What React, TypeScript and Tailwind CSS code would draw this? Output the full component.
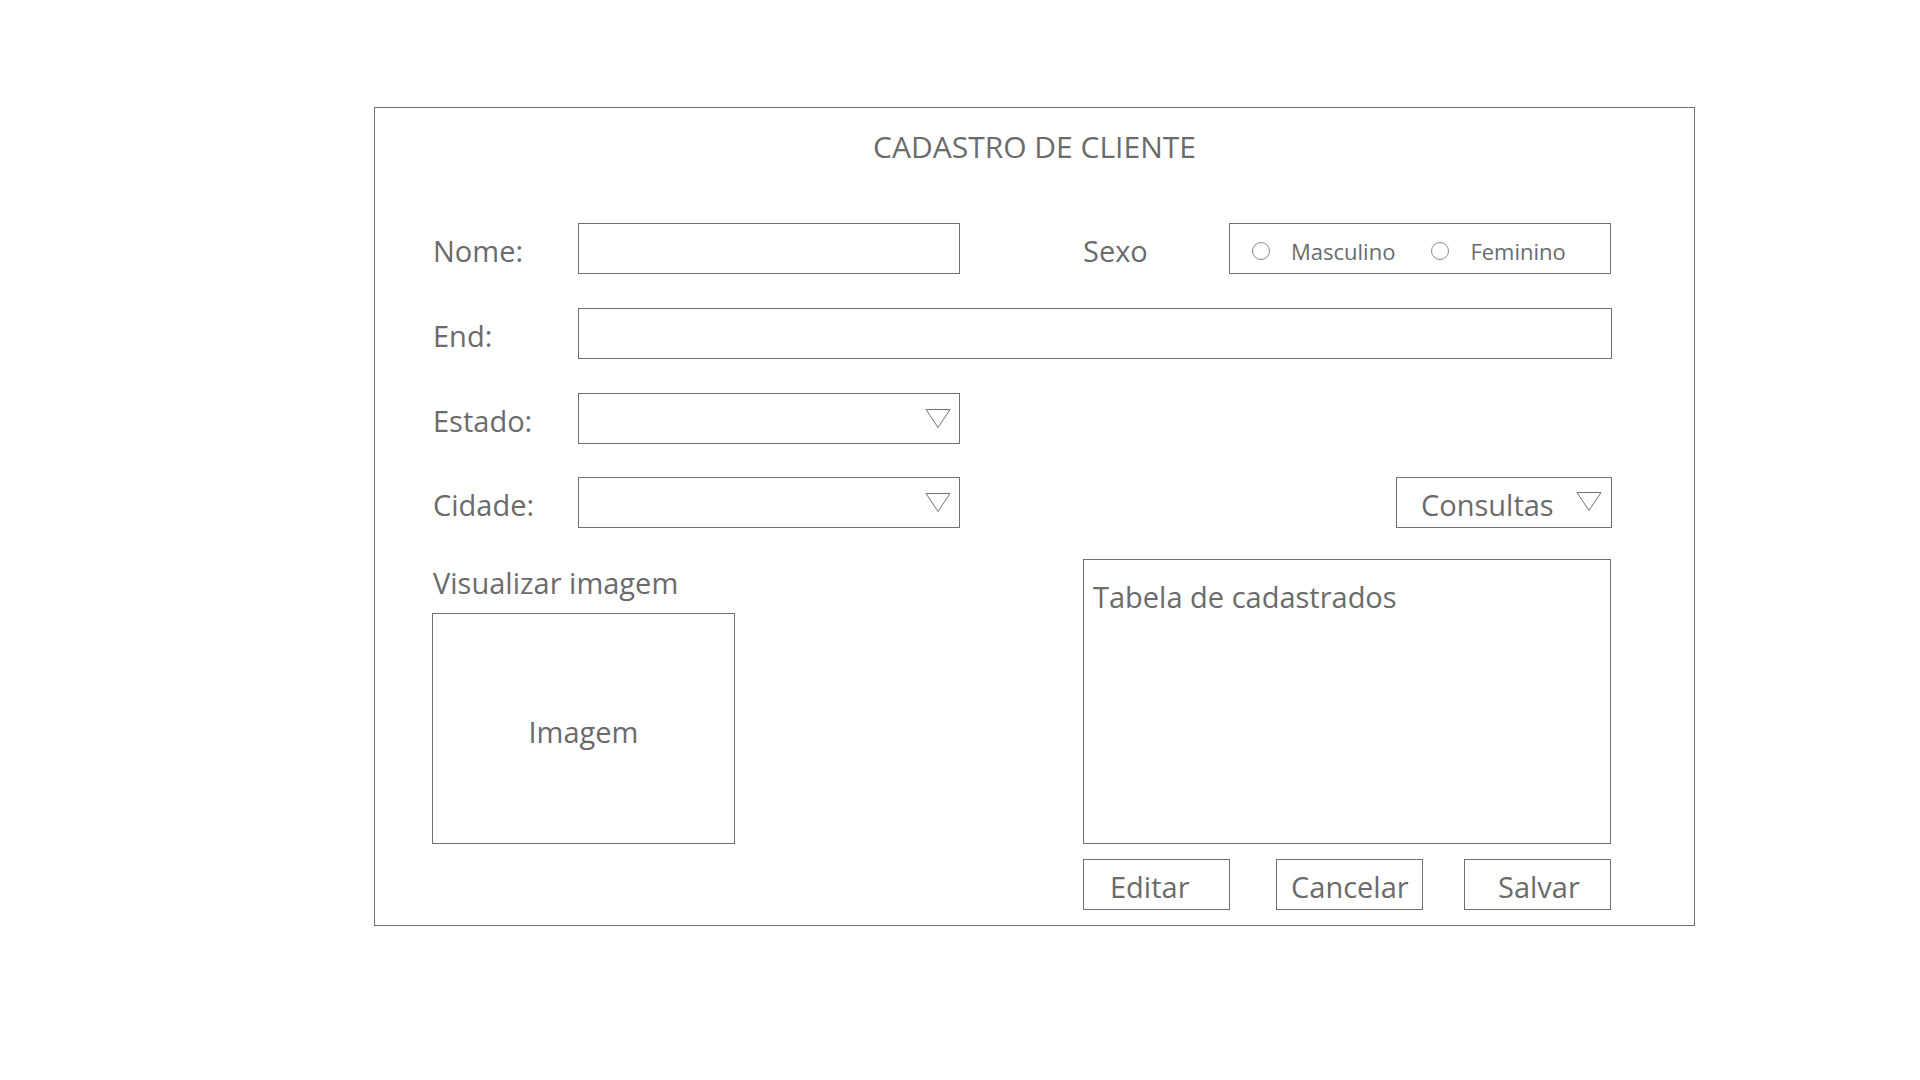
import React from 'react'

function Triangle(): React.ReactElement {
  return (
    <svg width='26' height='21' viewBox='0 0 26 21' fill='none'>
      <path d='M1 1.5 L25 1.5 L13 19.5 Z' stroke='#707070' strokeWidth='1' strokeLinejoin='miter' />
    </svg>
  )
}

function Radio({ label }: { label: string }): React.ReactElement {
  return (
    <div className='flex items-center'>
      <span className='block w-[18px] h-[18px] rounded-full border border-[#8a8a8a]'></span>
      <span className='ml-[21px] text-[22px] leading-none'>{label}</span>
    </div>
  )
}

function Label({ text }: { text: string }): React.ReactElement {
  return <span className='w-[145px] pt-[4px] text-[29px] leading-none'>{text}</span>
}

function App(): React.ReactElement {
  return (
    <div className='w-[1920px] h-[1080px] bg-white pt-[107px] pl-[374px] text-[#6b6b6b]' style={{ fontFamily: '"Open Sans", sans-serif' }}>
      <div className='flex flex-col w-[1321px] h-[819px] border border-[#707070] pt-[24px] pl-[58px] pr-[82px]'>
        <h1 className='text-center pl-[24px] text-[30px] leading-none font-normal'>CADASTRO DE CLIENTE</h1>

        <div className='flex flex-col mt-[61px]'>
          {/* nome + sexo */}
          <div className='flex items-center h-[51px]'>
            <Label text='Nome:' />
            <div className='w-[382px] h-full border border-[#707070]'></div>
            <span className='ml-[123px] w-[146px] pt-[4px] text-[29px] leading-none'>Sexo</span>
            <div className='flex items-center w-[382px] h-full border border-[#707070] pl-[22px] pt-[5px]'>
              <Radio label='Masculino' />
              <div className='ml-[36px]'>
                <Radio label='Feminino' />
              </div>
            </div>
          </div>

          <div className='flex items-center h-[51px] mt-[34px]'>
            <Label text='End:' />
            <div className='flex-1 h-full border border-[#707070]'></div>
          </div>

          <div className='flex items-center h-[51px] mt-[34px]'>
            <Label text='Estado:' />
            <div className='flex items-center justify-end w-[382px] h-full border border-[#707070] pr-[8px]'>
              <Triangle />
            </div>
          </div>

          <div className='flex items-center h-[51px] mt-[33px]'>
            <Label text='Cidade:' />
            <div className='flex items-center justify-end w-[382px] h-full border border-[#707070] pr-[8px]'>
              <Triangle />
            </div>
            <div className='ml-auto flex items-center w-[216px] h-full border border-[#707070] pl-[24px] pr-[9px]'>
              <span className='pt-[4px] text-[29px] leading-none'>Consultas</span>
              <div className='ml-auto -mt-[3px]'>
                <Triangle />
              </div>
            </div>
          </div>
        </div>

        <div className='flex mt-[31px]'>
          <div className='flex flex-col w-[651px] pt-[9px] -ml-[1px]'>
            <span className='pl-[1px] text-[29px] leading-none'>Visualizar imagem</span>
            <div className='flex items-center justify-center mt-[16px] w-[303px] h-[231px] border border-[#707070]'>
              <span className='pt-[6px] text-[29px] leading-none'>Imagem</span>
            </div>
          </div>

          <div className='flex flex-col w-[528px]'>
            <div className='h-[285px] border border-[#707070] pl-[9px] pt-[22px]'>
              <span className='text-[29px] leading-none'>Tabela de cadastrados</span>
            </div>
            <div className='flex mt-[15px]'>
              <button className='flex items-center w-[147px] h-[51px] border border-[#707070] pt-[4px] pl-[26px] text-[29px] leading-none'>Editar</button>
              <button className='flex items-center ml-[46px] w-[147px] h-[51px] border border-[#707070] pt-[4px] pl-[14px] text-[29px] leading-none'>Cancelar</button>
              <button className='flex items-center ml-[41px] w-[147px] h-[51px] border border-[#707070] pt-[4px] pl-[33px] text-[29px] leading-none'>Salvar</button>
            </div>
          </div>
        </div>
      </div>
    </div>
  )
}

export default App
